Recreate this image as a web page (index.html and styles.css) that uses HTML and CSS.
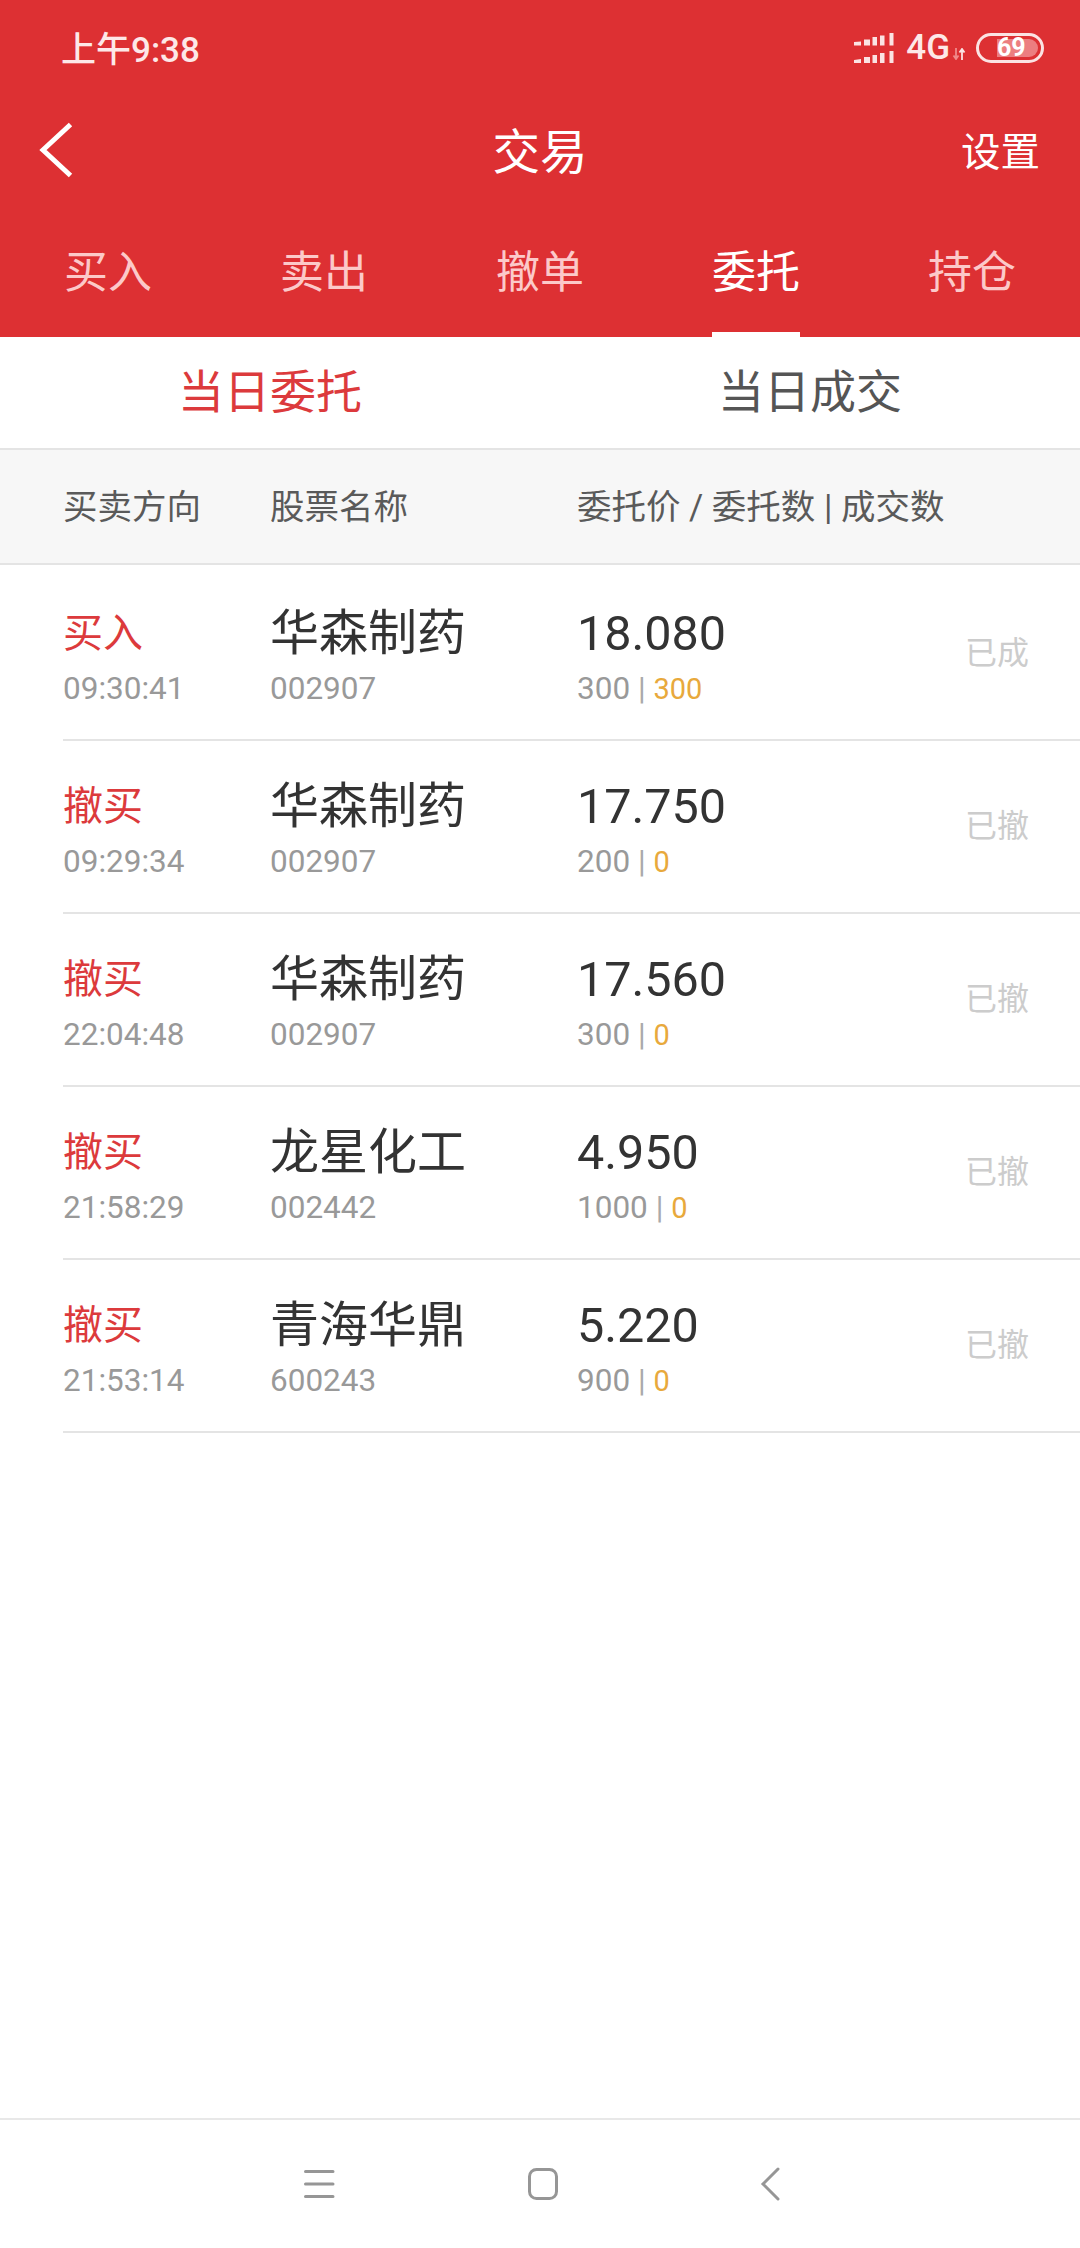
FILE: index.html
```html
<!DOCTYPE html>
<html lang="zh-CN">
<head>
  <meta charset="UTF-8">
  <meta name="viewport" content="width=device-width, initial-scale=1.0">
  <title>交易</title>
  <link rel="stylesheet" href="styles.css">
</head>
<body>

<div class="page">
  <header class="header">
    <div class="status-bar">
      <span class="clock">上午9:38</span>
      <div class="status-icons">
        <svg class="signal" width="40" height="32" viewBox="0 0 40 32" fill="#fbe3e3">
          <path d="M0 9 7 8.500V12.500H0ZM10 6.500H16V12.500H10ZM18.500 4H23V12.500H18.500ZM26 2.500H30.500V12.500H26ZM35.500 0H39.500V12.500H35.500Z"/>
          <path d="M0 27 7 26V30H0ZM10 24H16V30H10ZM18.500 22H23V30H18.500ZM26 20H30.500V30H26ZM35.500 18H39.500V30H35.500Z"/>
        </svg>
        <span class="network">4G</span>
        <svg class="arrows" width="14" height="12" viewBox="0 0 14 12">
          <path d="M4 0V10M1.500 7.500 4 11 6.500 7.500" fill="none" stroke="#f08a8a" stroke-width="1.800"/>
          <path d="M10 12V2M7.500 4.500 10 1 12.500 4.500" fill="none" stroke="#fbe3e3" stroke-width="1.800"/>
        </svg>
        <div class="battery">
          <div class="battery-fill"></div>
          <span class="battery-num">69</span>
        </div>
      </div>
    </div>
    <div class="title-bar">
      <svg class="back" width="40" height="56" viewBox="0 0 40 56">
        <path d="M34.500 2.500 7 28 34.500 53.500" fill="none" stroke="#fff" stroke-width="5"/>
      </svg>
      <h1 class="title">交易</h1>
      <span class="settings">设置</span>
    </div>
    <nav class="tabs">
      <a class="tab">买入</a>
      <a class="tab">卖出</a>
      <a class="tab">撤单</a>
      <a class="tab active">委托</a>
      <a class="tab">持仓</a>
    </nav>
  </header>

  <div class="sub-tabs">
    <div class="sub-tab active">当日委托</div>
    <div class="sub-tab">当日成交</div>
  </div>

  <div class="table-head">
    <span class="col-side">买卖方向</span>
    <span class="col-name">股票名称</span>
    <span class="col-price">委托价 / 委托数 | 成交数</span>
  </div>

  <main class="list">
    <div class="row">
      <div class="col-side">
        <div class="side">买入</div>
        <div class="small">09:30:41</div>
      </div>
      <div class="col-name">
        <div class="name">华森制药</div>
        <div class="small">002907</div>
      </div>
      <div class="col-price">
        <div class="price">18.080</div>
        <div class="small">300 <i>|</i> <b>300</b></div>
      </div>
      <div class="state">已成</div>
    </div>
    <div class="row">
      <div class="col-side">
        <div class="side">撤买</div>
        <div class="small">09:29:34</div>
      </div>
      <div class="col-name">
        <div class="name">华森制药</div>
        <div class="small">002907</div>
      </div>
      <div class="col-price">
        <div class="price">17.750</div>
        <div class="small">200 <i>|</i> <b>0</b></div>
      </div>
      <div class="state">已撤</div>
    </div>
    <div class="row">
      <div class="col-side">
        <div class="side">撤买</div>
        <div class="small">22:04:48</div>
      </div>
      <div class="col-name">
        <div class="name">华森制药</div>
        <div class="small">002907</div>
      </div>
      <div class="col-price">
        <div class="price">17.560</div>
        <div class="small">300 <i>|</i> <b>0</b></div>
      </div>
      <div class="state">已撤</div>
    </div>
    <div class="row">
      <div class="col-side">
        <div class="side">撤买</div>
        <div class="small">21:58:29</div>
      </div>
      <div class="col-name">
        <div class="name">龙星化工</div>
        <div class="small">002442</div>
      </div>
      <div class="col-price">
        <div class="price">4.950</div>
        <div class="small">1000 <i>|</i> <b>0</b></div>
      </div>
      <div class="state">已撤</div>
    </div>
    <div class="row">
      <div class="col-side">
        <div class="side">撤买</div>
        <div class="small">21:53:14</div>
      </div>
      <div class="col-name">
        <div class="name">青海华鼎</div>
        <div class="small">600243</div>
      </div>
      <div class="col-price">
        <div class="price">5.220</div>
        <div class="small">900 <i>|</i> <b>0</b></div>
      </div>
      <div class="state">已撤</div>
    </div>
  </main>

  <footer class="nav-bar">
    <svg class="nav-menu" width="32" height="32" viewBox="0 0 32 32">
      <path d="M2.500 3.500H30M2.500 16H30M2.500 28.500H30" fill="none" stroke="#969696" stroke-width="3" stroke-linecap="round"/>
    </svg>
    <svg class="nav-home" width="32" height="34" viewBox="0 0 32 34">
      <rect x="2.500" y="2.500" width="27" height="29" rx="7" fill="none" stroke="#969696" stroke-width="3"/>
    </svg>
    <svg class="nav-back" width="20" height="34" viewBox="0 0 20 34">
      <path d="M18 2 3 17 18 32" fill="none" stroke="#969696" stroke-width="3" stroke-linecap="round"/>
    </svg>
  </footer>
</div>

</body>
</html>
```

FILE: styles.css
```css
* {
  box-sizing: border-box;
}
body {
  margin: 0;
  background: #fff;
  font-family: Roboto, "Noto Sans CJK SC", sans-serif;
}
.page {
  display: flex;
  flex-direction: column;
  height: 2248px;
}

/* red top area */
.header {
  height: 337px;
  background-color: #dd3033;
  color: #fff;
}
.status-bar {
  display: flex;
  align-items: center;
  justify-content: space-between;
  height: 96px;
  padding: 0 36px 0 61px;
}
.clock {
  margin-bottom: 4px;
  font-size: 35px;
  font-weight: 500;
  color: #fde8e8;
}
.status-icons {
  display: flex;
  align-items: center;
}
.signal {
  margin: 2px 12px 0 0;
}
.network {
  font-size: 35px;
  font-weight: 500;
  line-height: 36px;
  color: #fde8e8;
}
.arrows {
  margin: 12px 10px 0 2px;
}
.battery {
  position: relative;
  width: 68px;
  height: 30px;
  border: 3px solid #fbe3e3;
  border-radius: 15px;
}
.battery-fill {
  position: absolute;
  top: 3px;
  bottom: 3px;
  left: 18px;
  right: 3px;
  border-radius: 0 9px 9px 0;
  background-color: #ec7e80;
}
.battery-num {
  position: absolute;
  top: 0;
  left: 18px;
  font-size: 25px;
  line-height: 24px;
  font-weight: 700;
  color: #fff;
}
.title-bar {
  display: grid;
  grid-template-columns: 1fr auto 1fr;
  align-items: center;
  height: 104px;
  padding: 0 40px;
}
.back {
  margin: 4px 0 0 -4px;
}
.title {
  margin: 0;
  font-size: 47.500px;
  font-weight: 400;
}
.settings {
  justify-self: end;
  font-size: 39.500px;
}
.tabs {
  display: grid;
  grid-template-columns: repeat(5, 1fr);
  height: 137px;
}
.tab {
  justify-self: center;
  height: 100%;
  padding-top: 41px;
  font-size: 44px;
  line-height: 64px;
  color: #fcc9c9;
}
.tab.active {
  color: #fff;
  border-bottom: 5px solid #fff;
}

.sub-tabs {
  display: grid;
  grid-template-columns: 1fr 1fr;
  height: 113px;
  border-bottom: 2px solid #e4e4e4;
}
.sub-tab {
  padding-top: 23px;
  text-align: center;
  font-size: 46px;
  line-height: 64px;
  color: #555;
}
.sub-tab.active {
  color: #dc3a3c;
}

.table-head {
  display: flex;
  align-items: center;
  height: 115px;
  padding: 0 0 6px 63px;
  background-color: #f7f7f7;
  border-bottom: 2px solid #e4e4e4;
  font-size: 34.500px;
  color: #5a5a5a;
}
.col-side {
  width: 207px;
}
.col-name {
  width: 307px;
}
.col-price {
  flex: 1;
}

.list {
  flex: 1;
  padding: 3px 0 0 63px;
}
.row {
  display: flex;
  align-items: center;
  height: 173px;
  padding: 6px 51px 0 0;
  border-bottom: 2px solid #e4e4e4;
}
.side {
  font-size: 40px;
  line-height: 58px;
  color: #dc3a3c;
}
.name {
  font-size: 49px;
  line-height: 58px;
  color: #333;
}
.price {
  font-size: 48.500px;
  line-height: 58px;
  color: #333;
}
.small {
  margin-top: 6px;
  font-size: 31.500px;
  line-height: 40px;
  color: #999;
}
.small i {
  font-style: normal;
  color: #aaa;
}
.small b {
  font-size: 29px;
  font-weight: 400;
  color: #e8a93c;
}
.state {
  margin-bottom: 14px;
  font-size: 32px;
  color: #ccc;
}

.nav-bar {
  display: flex;
  align-items: center;
  height: 130px;
  padding-left: 303px;
  border-top: 2px solid #e8e8e8;
}
.nav-home {
  margin-left: 192px;
}
.nav-back {
  margin-left: 201px;
}
```
